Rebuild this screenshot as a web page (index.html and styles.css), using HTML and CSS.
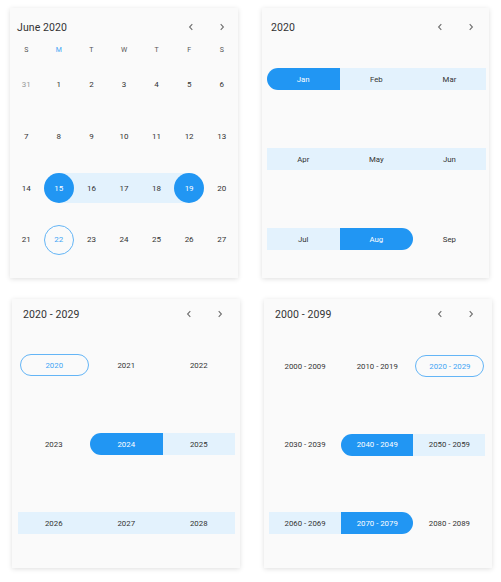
FILE: index.html
```html
<!DOCTYPE html>
<html>
<head>
<meta charset="utf-8">
<link rel="stylesheet" href="styles.css">
</head>
<body>
<div class="page">
  <!-- Month view -->
  <div class="card">
    <div class="head head-tall">
      <span class="title">June 2020</span>
      <span class="nav nav-month">
        <span class="arrow"><svg viewBox="0 0 8 8" width="8" height="8"><path d="M5.3 1.2 L2.6 4 L5.3 6.8" fill="none" stroke="#6f6f6f" stroke-width="1.1"/></svg></span>
        <span class="arrow"><svg viewBox="0 0 8 8" width="8" height="8"><path d="M2.7 1.2 L5.4 4 L2.7 6.8" fill="none" stroke="#6f6f6f" stroke-width="1.1"/></svg></span>
      </span>
    </div>
    <div class="weekdays">
      <span>S</span><span class="today-wd">M</span><span>T</span><span>W</span><span>T</span><span>F</span><span>S</span>
    </div>
    <div class="days">
      <div class="day"><div class="band"><span class="num muted">31</span></div></div>
      <div class="day"><div class="band"><span class="num">1</span></div></div>
      <div class="day"><div class="band"><span class="num">2</span></div></div>
      <div class="day"><div class="band"><span class="num">3</span></div></div>
      <div class="day"><div class="band"><span class="num">4</span></div></div>
      <div class="day"><div class="band"><span class="num">5</span></div></div>
      <div class="day"><div class="band"><span class="num">6</span></div></div>

      <div class="day"><div class="band"><span class="num">7</span></div></div>
      <div class="day"><div class="band"><span class="num">8</span></div></div>
      <div class="day"><div class="band"><span class="num">9</span></div></div>
      <div class="day"><div class="band"><span class="num">10</span></div></div>
      <div class="day"><div class="band"><span class="num">11</span></div></div>
      <div class="day"><div class="band"><span class="num">12</span></div></div>
      <div class="day"><div class="band"><span class="num">13</span></div></div>

      <div class="day"><div class="band"><span class="num">14</span></div></div>
      <div class="day"><div class="band range-start"><span class="num sel">15</span></div></div>
      <div class="day"><div class="band range"><span class="num">16</span></div></div>
      <div class="day"><div class="band range"><span class="num">17</span></div></div>
      <div class="day"><div class="band range"><span class="num">18</span></div></div>
      <div class="day"><div class="band range-end"><span class="num sel">19</span></div></div>
      <div class="day"><div class="band"><span class="num">20</span></div></div>

      <div class="day"><div class="band"><span class="num">21</span></div></div>
      <div class="day"><div class="band"><span class="num today">22</span></div></div>
      <div class="day"><div class="band"><span class="num">23</span></div></div>
      <div class="day"><div class="band"><span class="num">24</span></div></div>
      <div class="day"><div class="band"><span class="num">25</span></div></div>
      <div class="day"><div class="band"><span class="num">26</span></div></div>
      <div class="day"><div class="band"><span class="num">27</span></div></div>
    </div>
  </div>

  <!-- Year view -->
  <div class="card">
    <div class="head head-tall head-year">
      <span class="title">2020</span>
      <span class="nav nav-year">
        <span class="arrow"><svg viewBox="0 0 8 8" width="8" height="8"><path d="M5.3 1.2 L2.6 4 L5.3 6.8" fill="none" stroke="#6f6f6f" stroke-width="1.1"/></svg></span>
        <span class="arrow"><svg viewBox="0 0 8 8" width="8" height="8"><path d="M2.7 1.2 L5.4 4 L2.7 6.8" fill="none" stroke="#6f6f6f" stroke-width="1.1"/></svg></span>
      </span>
    </div>
    <div class="cells cells-months">
      <div class="cell sel-start">Jan</div>
      <div class="cell band-fill">Feb</div>
      <div class="cell band-fill">Mar</div>
      <div class="cell band-fill">Apr</div>
      <div class="cell band-fill">May</div>
      <div class="cell band-fill">Jun</div>
      <div class="cell band-fill">Jul</div>
      <div class="cell sel-end">Aug</div>
      <div class="cell">Sep</div>
    </div>
  </div>

  <!-- Decade view -->
  <div class="card shift">
    <div class="head head-short head-dec">
      <span class="title">2020 - 2029</span>
      <span class="nav nav-dec">
        <span class="arrow"><svg viewBox="0 0 8 8" width="8" height="8"><path d="M5.3 1.2 L2.6 4 L5.3 6.8" fill="none" stroke="#6f6f6f" stroke-width="1.1"/></svg></span>
        <span class="arrow"><svg viewBox="0 0 8 8" width="8" height="8"><path d="M2.7 1.2 L5.4 4 L2.7 6.8" fill="none" stroke="#6f6f6f" stroke-width="1.1"/></svg></span>
      </span>
    </div>
    <div class="cells cells-years">
      <div class="cell outline">2020</div>
      <div class="cell">2021</div>
      <div class="cell">2022</div>
      <div class="cell">2023</div>
      <div class="cell sel-start">2024</div>
      <div class="cell band-fill">2025</div>
      <div class="cell band-fill">2026</div>
      <div class="cell band-fill">2027</div>
      <div class="cell band-fill">2028</div>
    </div>
  </div>

  <!-- Century view -->
  <div class="card shift">
    <div class="head head-short head-cent">
      <span class="title">2000 - 2099</span>
      <span class="nav nav-cent">
        <span class="arrow"><svg viewBox="0 0 8 8" width="8" height="8"><path d="M5.3 1.2 L2.6 4 L5.3 6.8" fill="none" stroke="#6f6f6f" stroke-width="1.1"/></svg></span>
        <span class="arrow"><svg viewBox="0 0 8 8" width="8" height="8"><path d="M2.7 1.2 L5.4 4 L2.7 6.8" fill="none" stroke="#6f6f6f" stroke-width="1.1"/></svg></span>
      </span>
    </div>
    <div class="cells cells-cent">
      <div class="cell">2000 - 2009</div>
      <div class="cell">2010 - 2019</div>
      <div class="cell outline">2020 - 2029</div>
      <div class="cell">2030 - 2039</div>
      <div class="cell sel-start">2040 - 2049</div>
      <div class="cell band-fill">2050 - 2059</div>
      <div class="cell band-fill">2060 - 2069</div>
      <div class="cell sel-end">2070 - 2079</div>
      <div class="cell">2080 - 2089</div>
    </div>
  </div>
</div>
</body>
</html>
```

FILE: styles.css
```css
html, body {
  margin: 0;
  padding: 0;
  background: #ffffff;
}

body {
  font-family: Roboto, "Liberation Sans", sans-serif;
  color: #333333;
}

.page {
  display: grid;
  grid-template-columns: 228px 227px;
  grid-template-rows: 270px 269px;
  column-gap: 24px;
  row-gap: 21px;
  padding: 8px 0 14px 10px;
}

.card {
  background: #fafafa;
  box-shadow: 0 1px 5px rgba(0, 0, 0, 0.13);
  display: flex;
  flex-direction: column;
  overflow: hidden;
  min-height: 0;
  height: 100%;
  box-sizing: border-box;
}

.shift {
  margin-left: 2px;
  width: 228px;
}

/* header */
.head {
  display: flex;
  align-items: center;
  justify-content: space-between;
  flex: none;
}

.head-tall {
  height: 38px;
  padding-left: 7px;
}

.head-year {
  padding-left: 9px;
}

.head-short {
  height: 30px;
  padding-left: 11px;
}

.title {
  font-size: 10.5px;
  color: #333333;
  letter-spacing: 0.1px;
}

.nav {
  display: flex;
  align-items: center;
}

.nav-month {
  margin-right: 1px;
}

.nav-year {
  margin-right: 2.5px;
}

.nav-dec {
  margin-right: 5px;
}

.nav-cent {
  margin-right: 6px;
}

.arrow {
  width: 31px;
  height: 16px;
  display: flex;
  align-items: center;
  justify-content: center;
}

/* month view */
.weekdays {
  display: grid;
  grid-template-columns: repeat(7, 1fr);
  height: 8px;
  line-height: 8px;
  font-size: 7px;
  color: #555555;
  text-align: center;
}

.weekdays .today-wd {
  color: #42a5f5;
}

.days {
  display: grid;
  grid-template-columns: repeat(7, 1fr);
  grid-auto-rows: 51.7px;
  margin-top: 5px;
}

.day {
  display: flex;
  align-items: center;
}

.band {
  width: 100%;
  height: 30px;
  display: flex;
  align-items: center;
  justify-content: center;
}

.band.range {
  background: #e3f2fd;
}

.band.range-start {
  background: linear-gradient(to right, transparent 50%, #e3f2fd 50%);
}

.band.range-end {
  background: linear-gradient(to right, #e3f2fd 50%, transparent 50%);
}

.num {
  width: 30px;
  height: 30px;
  border-radius: 50%;
  box-sizing: border-box;
  display: flex;
  align-items: center;
  justify-content: center;
  font-size: 8px;
  color: #333333;
}

.num.muted {
  color: #999999;
}

.num.sel {
  background: #2196f3;
  color: #ffffff;
}

.num.today {
  border: 1px solid #64b5f6;
  color: #42a5f5;
}

/* month / year / decade grids */
.cells {
  display: grid;
  grid-template-columns: repeat(3, 1fr);
  grid-auto-rows: 22px;
}

.cells-months {
  padding: 22px 3px 0 4.7px;
  row-gap: 58px;
}

.cells-years {
  padding: 25px 5px 0 5.5px;
  row-gap: 57px;
}

.cells-cent {
  padding: 26px 6.5px 0 5px;
  row-gap: 56.5px;
}

.cell {
  display: flex;
  align-items: center;
  justify-content: center;
  font-size: 7.8px;
  color: #333333;
  box-sizing: border-box;
}

.cell.band-fill {
  background: #e3f2fd;
}

.cell.sel-start {
  background: #2196f3;
  color: #ffffff;
  border-radius: 11px 0 0 11px;
}

.cell.sel-end {
  background: #2196f3;
  color: #ffffff;
  border-radius: 0 11px 11px 0;
}

.cell.outline {
  border: 1px solid #64b5f6;
  border-radius: 11px;
  color: #42a5f5;
  margin: 0 1px 0 2px;
}
```
